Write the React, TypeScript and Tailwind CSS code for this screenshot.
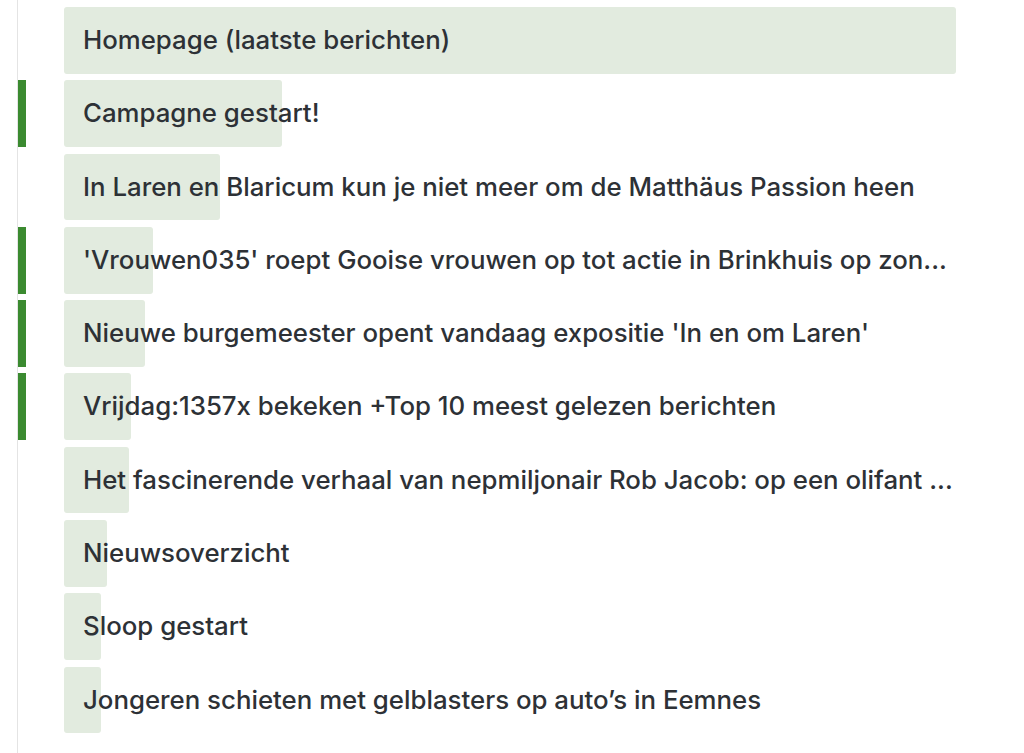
const rows = [
  { title: 'Homepage (laatste berichten)', width: 892, mark: false },
  { title: 'Campagne gestart!', width: 218, mark: true },
  { title: 'In Laren en Blaricum kun je niet meer om de Matthäus Passion heen', width: 156, mark: false },
  { title: "'Vrouwen035' roept Gooise vrouwen op tot actie in Brinkhuis op zon...", width: 89, mark: true },
  { title: "Nieuwe burgemeester opent vandaag expositie 'In en om Laren'", width: 81, mark: true },
  { title: 'Vrijdag:1357x bekeken +Top 10 meest gelezen berichten', width: 67, mark: true },
  { title: 'Het fascinerende verhaal van nepmiljonair Rob Jacob: op een olifant ...', width: 65, mark: false },
  { title: 'Nieuwsoverzicht', width: 43, mark: false },
  { title: 'Sloop gestart', width: 37, mark: false },
  { title: 'Jongeren schieten met gelblasters op auto’s in Eemnes', width: 37, mark: false },
];

export default function App() {
  return (
    <div className="h-[753px] w-[1024px] bg-white overflow-hidden">
      <div className="ml-[17px] h-full border-l border-[#e4e4e4] pt-[7px] flex flex-col gap-[6.6px]">
        {rows.map((row, i) => (
          <div key={i} className="flex h-[66.7px] shrink-0">
            <div className={`w-[8px] shrink-0 ${row.mark ? 'bg-[#3b8a30]' : ''}`} />
            <div className="relative ml-[38px] w-[892px] flex items-center">
              {/* relative bar behind the label */}
              <div
                className="absolute left-0 top-0 h-full rounded-[3px] bg-[#e2ebdf]"
                style={{ width: row.width }}
              />
              <span className="relative pl-[19px] whitespace-nowrap text-[25.8px] font-medium text-[#2d3136] font-['Inter',sans-serif]">
                {row.title}
              </span>
            </div>
          </div>
        ))}
      </div>
    </div>
  );
}
